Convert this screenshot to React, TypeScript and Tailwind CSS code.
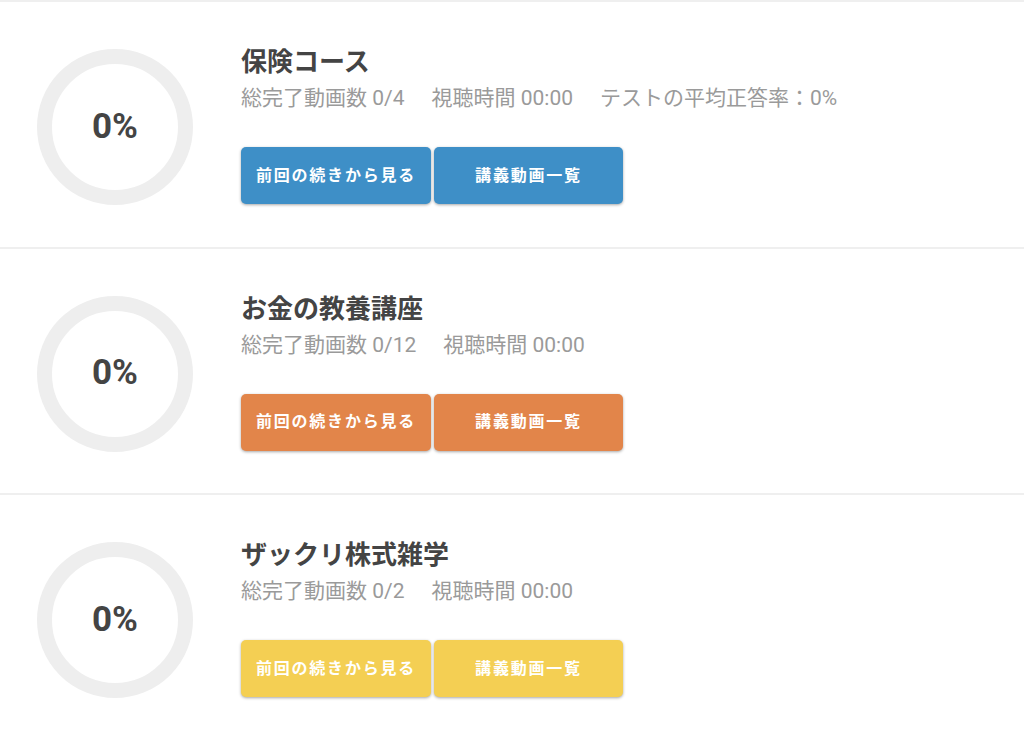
import React from "react";

type Course = {
  title: string;
  stats: string[];
  color: string;
};

const courses: Course[] = [
  {
    title: "保険コース",
    stats: ["総完了動画数 0/4", "視聴時間 00:00", "テストの平均正答率：0%"],
    color: "bg-[#3e8fc7]",
  },
  {
    title: "お金の教養講座",
    stats: ["総完了動画数 0/12", "視聴時間 00:00"],
    color: "bg-[#e2854a]",
  },
  {
    title: "ザックリ株式雑学",
    stats: ["総完了動画数 0/2", "視聴時間 00:00"],
    color: "bg-[#f4cf53]",
  },
];

function Card({ c }: { c: Course }) {
  return (
    <div className="h-[246.5px] border-t-[2px] border-[#efefef] flex items-start">
      <div className="ml-[37px] mt-[47px] w-[156px] h-[156px] rounded-full border-[15px] border-[#eeeeee] flex items-center justify-center shrink-0">
        <span className="text-[35px] font-bold text-[#444]">0%</span>
      </div>
      <div className="ml-[48px] mt-[45px] flex flex-col">
        <div className="text-[26px] leading-[30px] font-bold text-[#444]">{c.title}</div>
        <div className="mt-[7px] flex gap-[27px] text-[21px] leading-[28px] text-[#9a9a9a]">
          {c.stats.map((s) => (
            <span key={s}>{s}</span>
          ))}
        </div>
        <div className="mt-[35px] flex gap-[3px]">
          <button
            className={`${c.color} w-[190px] h-[57px] rounded-[5px] text-white text-[16px] font-bold tracking-[1.8px] shadow-[0_1px_3px_rgba(0,0,0,0.35)]`}
          >
            前回の続きから見る
          </button>
          <button
            className={`${c.color} w-[189px] h-[57px] rounded-[5px] text-white text-[16px] font-bold tracking-[1.8px] shadow-[0_1px_3px_rgba(0,0,0,0.35)]`}
          >
            講義動画一覧
          </button>
        </div>
      </div>
    </div>
  );
}

export default function App() {
  return (
    <div
      className="w-[1024px] h-[736px] bg-white overflow-hidden"
      style={{ fontFamily: "Roboto, 'Noto Sans CJK JP', sans-serif" }}
    >
      {courses.map((c) => (
        <Card key={c.title} c={c} />
      ))}
    </div>
  );
}
